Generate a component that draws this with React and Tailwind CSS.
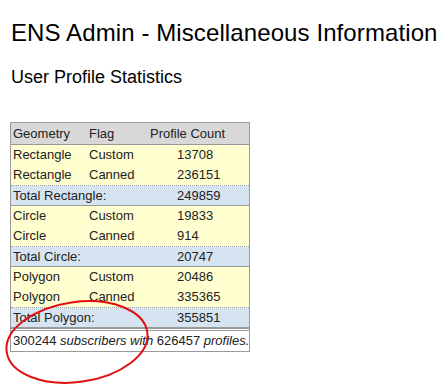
import React from "react";

const groups = [
  {
    name: "Rectangle",
    rows: [
      ["Rectangle", "Custom", "13708"],
      ["Rectangle", "Canned", "236151"],
    ],
    total: "249859",
  },
  {
    name: "Circle",
    rows: [
      ["Circle", "Custom", "19833"],
      ["Circle", "Canned", "914"],
    ],
    total: "20747",
  },
  {
    name: "Polygon",
    rows: [
      ["Polygon", "Custom", "20486"],
      ["Polygon", "Canned", "335365"],
    ],
    total: "355851",
  },
];

export default function App() {
  return (
    <div
      className="relative w-[438px] h-[389px] overflow-hidden bg-white text-black"
      style={{ fontFamily: '"Liberation Sans", Arial, sans-serif' }}
    >
      <div className="pl-[11px] pt-[19px]">
        <h1 className="text-[24px] leading-[28px] tracking-[0.1px] whitespace-nowrap">
          ENS Admin - Miscellaneous Information
        </h1>
        <h2 className="mt-[19px] text-[18px] leading-[22px]">User Profile Statistics</h2>
      </div>

      {/* stats table */}
      <div className="ml-[10px] mt-[34px] w-[240px] border border-[#9a9a9a] text-[13px] leading-[20px] text-[#222]">
        <div className="flex h-[22px] items-center bg-[#d8d8d8] border-b border-[#9a9a9a]">
          <span className="w-[78px] pl-[2px]">Geometry</span>
          <span className="w-[60px]">Flag</span>
          <span className="pl-[1px]">Profile Count</span>
        </div>
        {groups.map((g) => (
          <div key={g.name}>
            {g.rows.map((r, i) => (
              <div
                key={i}
                className={
                  "flex items-center bg-[#ffffd0] " +
                  (i === g.rows.length - 1
                    ? "h-[21px] border-b border-dotted border-[#9aa0aa]"
                    : "h-[20px]")
                }
              >
                <span className="w-[78px] pl-[2px]">{r[0]}</span>
                <span className="w-[60px]">{r[1]}</span>
                <span className="pl-[28px]">{r[2]}</span>
              </div>
            ))}
            <div className="flex h-[20px] items-center bg-[#d6e3f0] border-b border-[#9a9a9a]">
              <span className="w-[138px] pl-[2px]">Total {g.name}:</span>
              <span className="pl-[28px]">{g.total}</span>
            </div>
          </div>
        ))}
        <div className="flex h-[23px] items-center border-t-[3px] border-double border-[#9a9a9a] pl-[2px] whitespace-nowrap">
          300244&nbsp;<i>subscribers with</i>&nbsp;626457&nbsp;<i>profiles.</i>
        </div>
      </div>

      {/* red hand-drawn annotation */}
      <svg className="absolute left-0 top-0" width="438" height="389">
        <ellipse
          cx="77"
          cy="342"
          rx="71"
          ry="40"
          transform="rotate(-8 77 342)"
          fill="none"
          stroke="#e01010"
          strokeWidth="2"
        />
      </svg>
    </div>
  );
}
